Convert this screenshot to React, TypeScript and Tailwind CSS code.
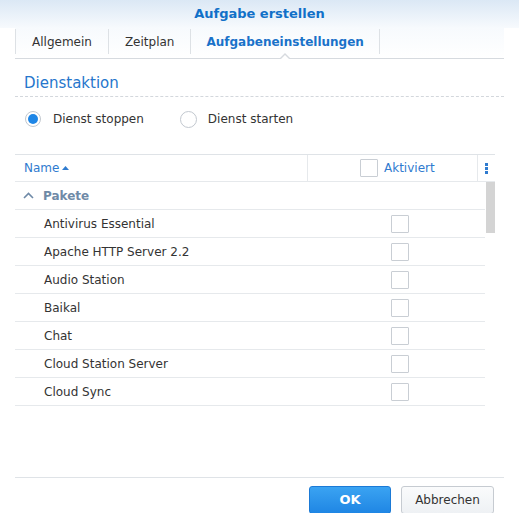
const rows = [
  'Antivirus Essential',
  'Apache HTTP Server 2.2',
  'Audio Station',
  'Baikal',
  'Chat',
  'Cloud Station Server',
  'Cloud Sync',
]

function Box() {
  return <span className="block w-[18px] h-[18px] border border-[#c9ced4] bg-white rounded-[1px]" />
}

export default function App() {
  return (
    <div className="w-[519px] h-[513px] overflow-hidden bg-white text-[12px] text-[#333] font-['DejaVu_Sans',Verdana,sans-serif]">
      {/* Title */}
      <div className="h-[28px] bg-gradient-to-b from-[#dbe8f5] to-[#f7fafd] flex items-center justify-center">
        <span className="text-[13px] font-bold text-[#1170c8]">Aufgabe erstellen</span>
      </div>

      {/* Tabs */}
      <div className="mx-[15px] h-[31px] border-b border-[#d6dadf] flex items-start bg-gradient-to-b from-[#f7fafd] to-white">
        <div className="h-[25px] mt-[1px] border-l border-[#dde1e5] px-[16px] flex items-center">Allgemein</div>
        <div className="h-[25px] mt-[1px] border-l border-[#dde1e5] px-[16px] flex items-center">Zeitplan</div>
        <div className="relative h-[25px] mt-[1px] border-l border-r border-[#dde1e5] px-[15px] flex items-center font-bold text-[#1a72c9]">
          Aufgabeneinstellungen
          <span className="absolute left-1/2 -translate-x-1/2 top-[24px] w-0 h-0 border-l-[6px] border-r-[6px] border-b-[6px] border-l-transparent border-r-transparent border-b-[#d6dadf]" />
          <span className="absolute left-1/2 -translate-x-1/2 top-[25.5px] w-0 h-0 border-l-[5px] border-r-[5px] border-b-[5px] border-l-transparent border-r-transparent border-b-white" />
        </div>
      </div>

      {/* Section */}
      <div className="mx-[15px] mt-[12px] h-[26px] border-b border-dashed border-[#d3d7dc] pl-[9px] pt-[2px] flex items-start">
        <span className="text-[15px] text-[#2676cc] leading-[20px]">Dienstaktion</span>
      </div>

      <div className="flex items-center h-[20px] mt-[12px] pl-[25px]">
        <span className="w-[16px] h-[16px] rounded-full border border-[#c2c8cf] bg-white flex items-center justify-center">
          <span className="w-[10px] h-[10px] rounded-full bg-[#1e86e6]" />
        </span>
        <span className="ml-[12px]">Dienst stoppen</span>
        <span className="ml-[36px] w-[17px] h-[17px] rounded-full border border-[#c2c8cf] bg-white" />
        <span className="ml-[11px]">Dienst starten</span>
      </div>

      {/* Table */}
      <div className="mt-[25px] ml-[15px] w-[480px] h-[323px] border-t border-[#dfe3e7]">
        <div className="flex h-[27px] border-b border-[#e6e9ec] text-[#2f7bcf]">
          <div className="w-[293px] border-r border-[#e6e9ec] pl-[9px] flex items-center">
            Name
            <svg width="7" height="4" viewBox="0 0 7 4" className="ml-[3px]">
              <path d="M0 4 L3.5 0 L7 4 Z" fill="#2f7bcf" />
            </svg>
          </div>
          <div className="w-[170px] border-r border-[#e6e9ec] flex items-center pl-[52px]">
            <Box />
            <span className="ml-[6px]">Aktiviert</span>
          </div>
          <div className="flex-1 flex flex-col items-center justify-center gap-[1px]">
            <span className="w-[3px] h-[3px] bg-[#2f7bcf]" />
            <span className="w-[3px] h-[3px] bg-[#2f7bcf]" />
            <span className="w-[3px] h-[3px] bg-[#2f7bcf]" />
          </div>
        </div>
        <div className="flex">
          <div className="w-[470px]">
            <div className="h-[28px] border-b border-[#e6e9ec] flex items-center pl-[8px] text-[#6f8aa7] font-bold">
              <svg width="11" height="7" viewBox="0 0 11 7" className="mr-[9px]">
                <path d="M1 6 L5.5 1.5 L10 6" stroke="#6f8aa7" strokeWidth="1.6" fill="none" />
              </svg>
              Pakete
            </div>
            {rows.map((r) => (
              <div key={r} className="h-[28px] border-b border-[#e6e9ec] flex items-center">
                <span className="w-[376px] pl-[29px]">{r}</span>
                <Box />
              </div>
            ))}
          </div>
          <div className="w-[9px] ml-[1px] h-[51px] bg-[#d4d4d4]" />
        </div>
      </div>

      {/* Footer */}
      <div className="mx-[15px] border-t border-[#dfe3e7] pt-[8px] flex justify-end pr-[10px] gap-[10px]">
        <button className="w-[82px] h-[28px] rounded-[3px] border border-[#1b7ad6] bg-gradient-to-b from-[#3aa3f2] to-[#1f86e4] text-white font-bold text-[13px]">
          OK
        </button>
        <button className="w-[93px] h-[28px] rounded-[3px] border border-[#c6cbd1] bg-gradient-to-b from-[#fafbfc] to-[#eef1f4] text-[#333] text-[12px]">
          Abbrechen
        </button>
      </div>
    </div>
  )
}
